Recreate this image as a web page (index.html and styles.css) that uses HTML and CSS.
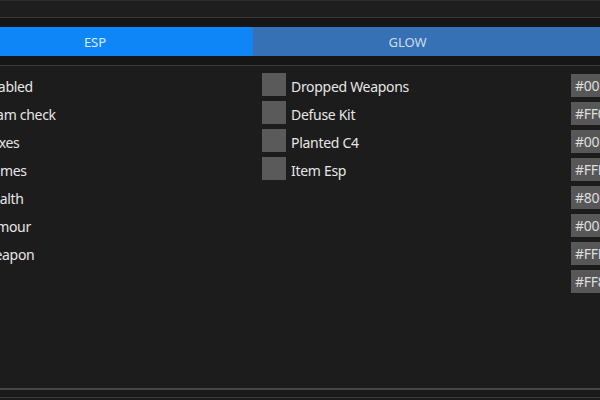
FILE: index.html
```html
<!DOCTYPE html>
<html>
<head>
<meta charset="utf-8">
<link rel="stylesheet" href="styles.css">
</head>
<body>
<div class="titlebar"></div>
<div class="tabs-wrap">
  <div class="tabs">
    <div class="tab active">ESP</div>
    <div class="tab">GLOW</div>
  </div>
</div>
<div class="content">
  <div class="col">
    <div class="row"><span class="check"></span><span class="label">Enabled</span></div>
    <div class="row"><span class="check"></span><span class="label">Team check</span></div>
    <div class="row"><span class="check"></span><span class="label">Boxes</span></div>
    <div class="row"><span class="check"></span><span class="label">Names</span></div>
    <div class="row"><span class="check"></span><span class="label">Health</span></div>
    <div class="row"><span class="check"></span><span class="label">Armour</span></div>
    <div class="row"><span class="check"></span><span class="label">Weapon</span></div>
  </div>
  <div class="col">
    <div class="row"><span class="check"></span><span class="label">Dropped Weapons</span></div>
    <div class="row"><span class="check"></span><span class="label">Defuse Kit</span></div>
    <div class="row"><span class="check"></span><span class="label">Planted C4</span></div>
    <div class="row"><span class="check"></span><span class="label">Item Esp</span></div>
  </div>
  <div class="col">
    <div class="color">#00FF00</div>
    <div class="color">#FF0000</div>
    <div class="color">#00FFFF</div>
    <div class="color">#FFFF00</div>
    <div class="color">#8000FF</div>
    <div class="color">#0080FF</div>
    <div class="color">#FFFFFF</div>
    <div class="color">#FF8000</div>
  </div>
</div>
<div class="footer"></div>
</body>
</html>
```

FILE: styles.css
```css
html, body {
  margin: 0;
  padding: 0;
  width: 600px;
  height: 400px;
  overflow: hidden;
  background: #1c1c1c;
  font-family: "Noto Sans", "Open Sans", sans-serif;
  font-size: 14px;
  color: #e6e6e6;
}
.titlebar {
  height: 16px;
  border-top: 1px solid #2c2c2c;
  border-bottom: 1px solid #3a3a3a;
  background: #1e1e1e;
}
.tabs-wrap {
  background: #161616;
  padding: 9px 0;
  border-bottom: 1px solid #3a3a3a;
}
.tabs {
  display: flex;
  height: 29px;
  margin-left: -63px;
  background: #3670b5;
}
.tab {
  width: 309px;
  display: flex;
  align-items: center;
  justify-content: center;
  font-size: 13px;
  color: #cfdcf0;
}
.tab.active {
  width: 316px;
  background: #0f86f8;
  color: #dcebff;
}
.content {
  height: 315px;
  padding-top: 7px;
  margin-left: -47px;
  display: grid;
  grid-template-columns: 309px 309px 309px;
  align-items: start;
}
.col {
  display: flex;
  flex-direction: column;
  gap: 5px;
}
.row {
  display: flex;
  align-items: center;
  gap: 5px;
  height: 23px;
}
.check {
  width: 24px;
  height: 23px;
  background: #5a5a5a;
}
.label {
  line-height: 23px;
  margin-top: 4px;
  letter-spacing: -0.3px;
  white-space: nowrap;
}
.col .color {
  height: 23px;
  line-height: 23px;
  width: 70px;
  padding-left: 4px;
  background: #575757;
  color: #dedede;
  letter-spacing: -0.3px;
  margin-top: 1px;
  margin-bottom: -1px;
}
.footer {
  height: 7px;
  border-top: 2px solid #464646;
  border-bottom: 1px solid #3a3a3a;
  background: #1a1a1a;
}
```
